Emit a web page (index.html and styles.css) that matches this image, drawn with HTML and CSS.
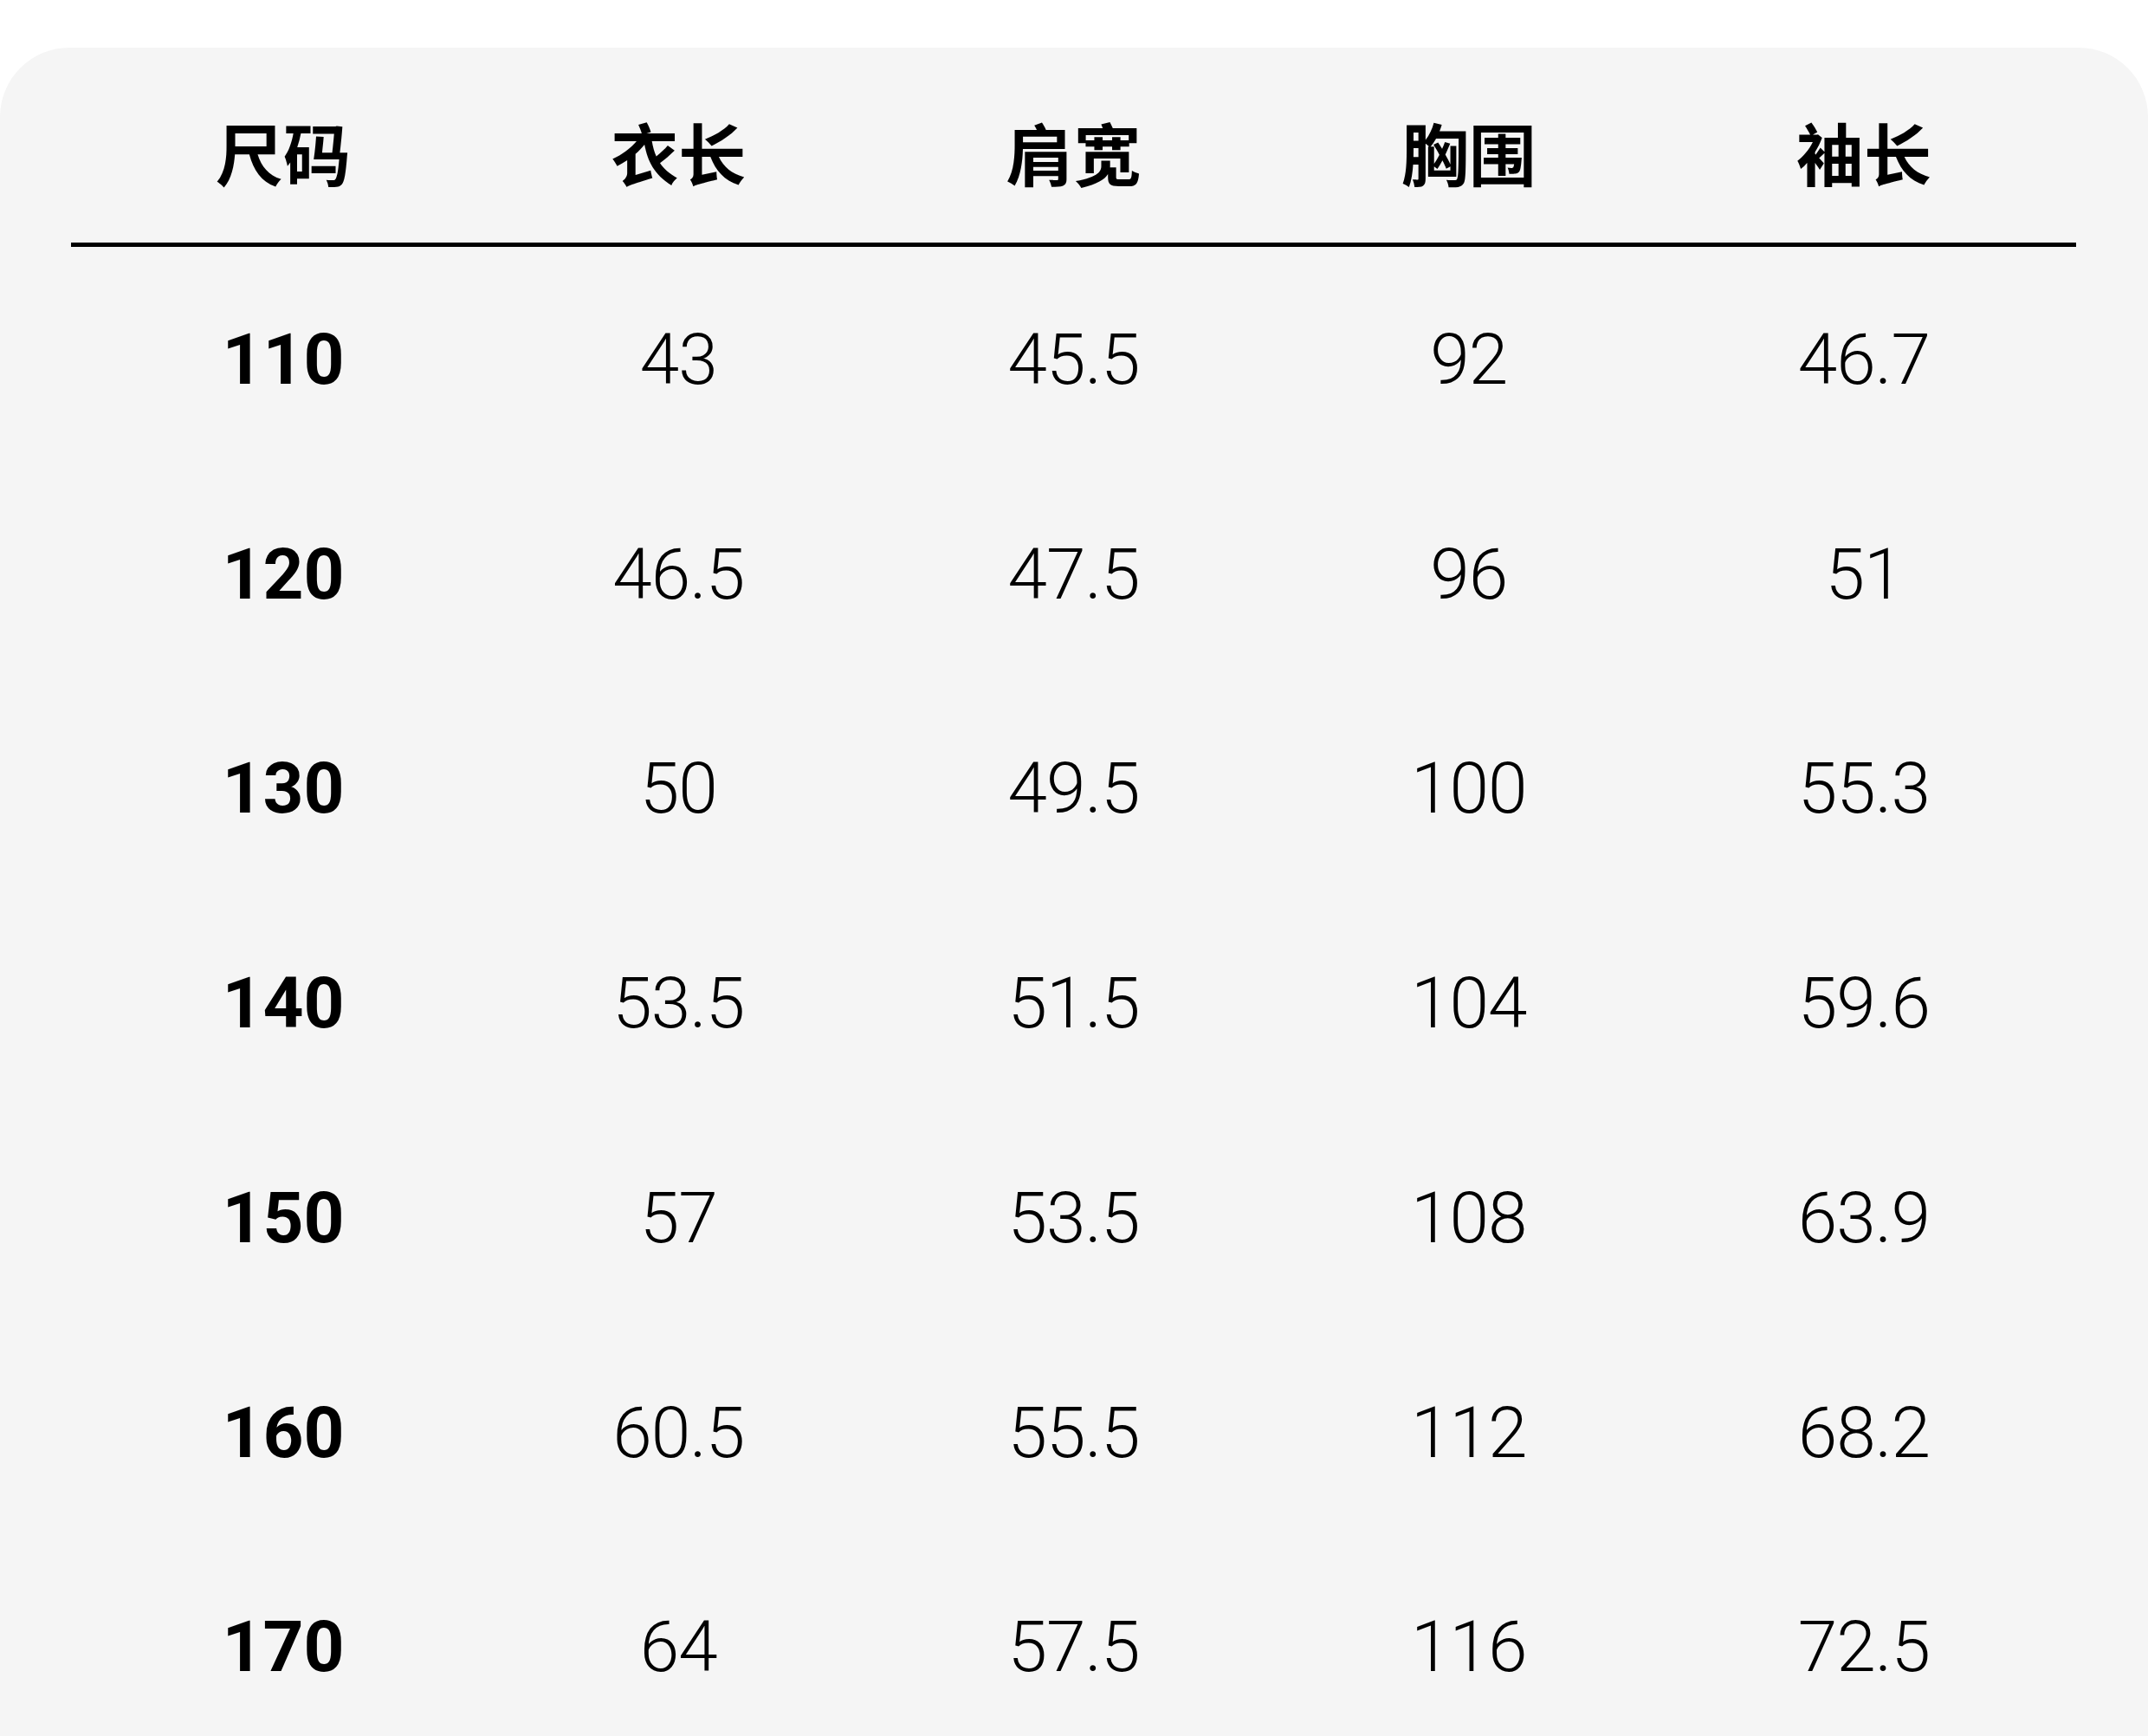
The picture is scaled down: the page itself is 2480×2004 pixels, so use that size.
FILE: index.html
```html
<!DOCTYPE html>
<html lang="zh-CN">
<head>
<meta charset="utf-8">
<title>尺码表</title>
<link rel="stylesheet" href="styles.css">
</head>
<body>
<div class="card">
  <div class="head">
    <div class="cell">尺码</div>
    <div class="cell">衣长</div>
    <div class="cell">肩宽</div>
    <div class="cell">胸围</div>
    <div class="cell">袖长</div>
  </div>
  <div class="rows">
    <div class="row"><div class="cell size">110</div><div class="cell">43</div><div class="cell">45.5</div><div class="cell">92</div><div class="cell">46.7</div></div>
    <div class="row"><div class="cell size">120</div><div class="cell">46.5</div><div class="cell">47.5</div><div class="cell">96</div><div class="cell">51</div></div>
    <div class="row"><div class="cell size">130</div><div class="cell">50</div><div class="cell">49.5</div><div class="cell">100</div><div class="cell">55.3</div></div>
    <div class="row"><div class="cell size">140</div><div class="cell">53.5</div><div class="cell">51.5</div><div class="cell">104</div><div class="cell">59.6</div></div>
    <div class="row"><div class="cell size">150</div><div class="cell">57</div><div class="cell">53.5</div><div class="cell">108</div><div class="cell">63.9</div></div>
    <div class="row"><div class="cell size">160</div><div class="cell">60.5</div><div class="cell">55.5</div><div class="cell">112</div><div class="cell">68.2</div></div>
    <div class="row"><div class="cell size">170</div><div class="cell">64</div><div class="cell">57.5</div><div class="cell">116</div><div class="cell">72.5</div></div>
  </div>
</div>
</body>
</html>
```
FILE: styles.css
```css
html, body {
  margin: 0;
  padding: 0;
  background: #ffffff;
}

body {
  overflow: hidden;
}

.card {
  margin-top: 55px;
  background: #f5f5f5;
  border-radius: 80px 80px 0 0;
  padding: 0 83px 0 82px;
  min-height: 2100px;
  color: #000;
}

.head {
  display: grid;
  grid-template-columns: repeat(5, 1fr);
  align-items: center;
  height: 211px;
  padding: 14px 17px 0;
  border-bottom: 5px solid #000;
  font-family: "Noto Sans CJK SC", sans-serif;
  font-weight: 700;
  font-size: 78px;
  line-height: 1;
}

.rows {
  padding: 6px 17px 0;
}

.row {
  display: grid;
  grid-template-columns: repeat(5, 1fr);
  align-items: center;
  height: 247.75px;
  font-family: Roboto, "Noto Sans", sans-serif;
  font-weight: 300;
  font-size: 82px;
  letter-spacing: -1px;
  line-height: 1;
  color: #000;
}

.cell {
  text-align: center;
}

.size {
  font-weight: 700;
  letter-spacing: 0;
  color: #000;
}
```
